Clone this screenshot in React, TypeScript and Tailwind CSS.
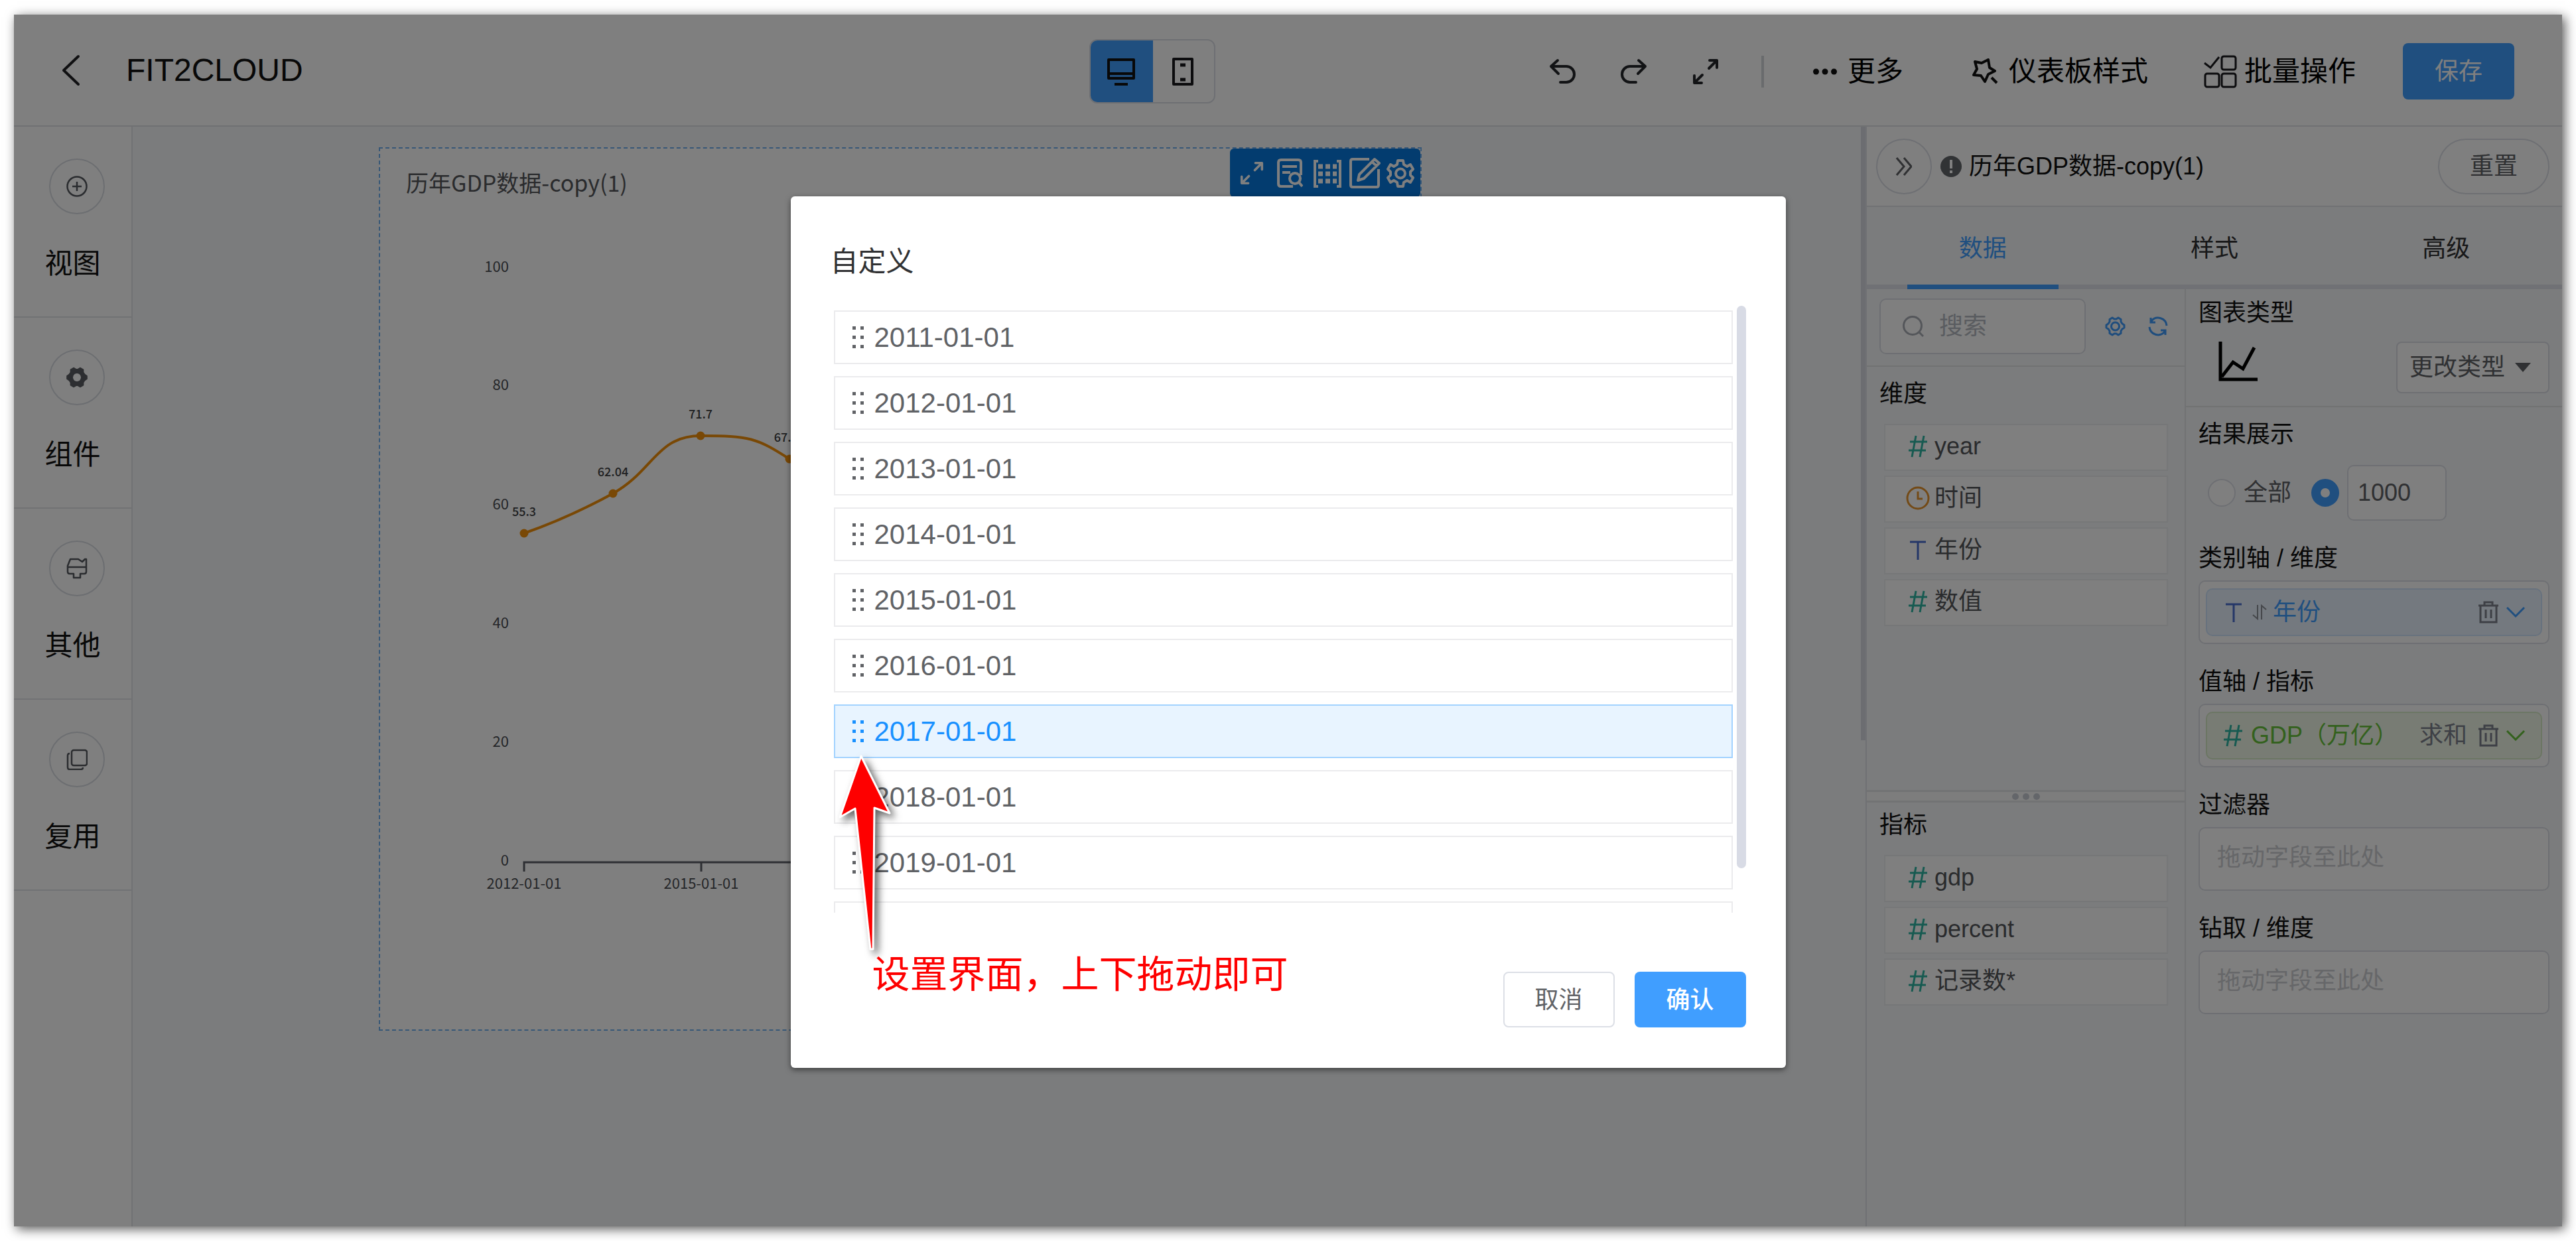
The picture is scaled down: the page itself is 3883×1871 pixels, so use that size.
import type { ReactNode } from "react";

const uiFont = "font-['Liberation_Sans','Noto_Sans_CJK_SC',sans-serif]";

const hexGear =
  "M13 3 L16 5 L19 5 L22 3 L26 5.500 L26 9 L28 12 L31 14 L31 18 L28 20 L26 23 L26 26.500 L22 29 L19 27 L16 27 L13 29 L9 26.500 L9 23 L7 20 L4 18 L4 14 L7 12 L9 9 L9 5.500 Z";

function BackIcon() {
  return (
    <svg className="h-12 w-7" viewBox="0 0 28 48" fill="none" stroke="#202124" strokeWidth="4" strokeLinecap="round" strokeLinejoin="round">
      <path d="M25 3 L3 24 L25 45" />
    </svg>
  );
}

function MonitorIcon() {
  return (
    <svg className="h-[42px] w-[44px]" viewBox="0 0 44 42" fill="none" stroke="#111" strokeWidth="4">
      <path d="M3 3 H41 V31 H3 Z M3 24 H41 M12 40 H32" strokeLinejoin="round" />
    </svg>
  );
}

function PhoneIcon() {
  return (
    <svg className="h-[44px] w-[34px]" viewBox="0 0 34 44" fill="none" stroke="#18191c" strokeWidth="4">
      <path d="M3 3 H31 V41 H3 Z" strokeLinejoin="round" />
      <path d="M13 12 H21 M13 34 H21" strokeWidth="5" />
    </svg>
  );
}

function UndoIcon({ flip = false }: { flip?: boolean }) {
  return (
    <svg className={flip ? "h-10 w-10 -scale-x-100" : "h-10 w-10"} viewBox="0 0 40 40" fill="none" stroke="#25272b" strokeWidth="4" strokeLinecap="round" strokeLinejoin="round">
      <path d="M13 3 L3 12 L14 23 M3 12 H26 a12 12 0 0 1 0 24 H17" />
    </svg>
  );
}

function ExpandIcon({ className }: { className: string }) {
  return (
    <svg className={className} viewBox="0 0 40 40" fill="none" strokeWidth="4" strokeLinecap="round" strokeLinejoin="round">
      <path d="M26 3 H37 V14 M36 4 L25 15 M3 26 V37 H14 M4 36 L15 25" />
    </svg>
  );
}

function StyleIcon() {
  return (
    <svg className="h-10 w-10" viewBox="0 0 40 40" fill="none" stroke="#111" strokeWidth="4" strokeLinejoin="round">
      <path d="M5 5 L15 7 L25 2 L27 14 L35 19 L25 24 L20 35 L14 26 L3 25 L8 16 Z" />
      <path d="M30 29 L38 37" />
    </svg>
  );
}

function BatchIcon() {
  return (
    <svg className="h-[50px] w-[50px]" viewBox="0 0 50 50" fill="none" stroke="#18191c" strokeWidth="3">
      <path d="M1 12 L10 19 L23 3" />
      <rect x="27" y="2" width="21" height="20" rx="3" />
      <rect x="2" y="28" width="21" height="20" rx="3" />
      <rect x="27" y="28" width="21" height="20" rx="3" />
    </svg>
  );
}

function HashIcon({ className = "" }: { className?: string }) {
  return (
    <svg className={`h-[34px] w-[30px] shrink-0 ${className}`} viewBox="0 0 30 34" fill="none" stroke="#2fb5a2" strokeWidth="3">
      <path d="M12 1 L6 33 M24 1 L18 33 M3 10 H29 M1 23 H27" />
    </svg>
  );
}

function ClockIcon() {
  return (
    <svg className="h-[36px] w-[36px] shrink-0" viewBox="0 0 36 36" fill="none" stroke="#e6952e" strokeWidth="3">
      <circle cx="18" cy="18" r="16" />
      <path d="M18 8 V19 H25" />
    </svg>
  );
}

function TextIcon() {
  return (
    <svg className="h-[30px] w-[26px] shrink-0" viewBox="0 0 26 30" fill="none" stroke="#4a6fd0" strokeWidth="3">
      <path d="M1 3 H25 M13 3 V30" />
    </svg>
  );
}

function SortIcon() {
  return (
    <svg className="h-6 w-6 shrink-0" viewBox="0 0 24 24" fill="none" stroke="#8b8f96" strokeWidth="2">
      <path d="M9 1 V22 L2 16 M15 23 V2 L22 8" />
    </svg>
  );
}

function TrashIcon() {
  return (
    <svg className="h-[34px] w-[32px] shrink-0" viewBox="0 0 32 34" fill="none" stroke="#7d818c" strokeWidth="3">
      <path d="M1 7 H31 M10 7 V2 H22 V7 M4 7 V32 H28 V7 M12 13 V26 M20 13 V26" />
    </svg>
  );
}

function ChevronIcon({ className }: { className: string }) {
  return (
    <svg className={`h-4 w-7 shrink-0 ${className}`} viewBox="0 0 28 16" fill="none" strokeWidth="3">
      <path d="M1 1 L14 14 L27 1" />
    </svg>
  );
}

const sideItems: { label: string; icon: ReactNode }[] = [
  {
    label: "视图",
    icon: (
      <svg className="h-8 w-8" viewBox="0 0 32 32" fill="none" stroke="#55585e" strokeWidth="2.500">
        <circle cx="16" cy="16" r="14.500" />
        <path d="M16 9 V23 M9 16 H23" />
      </svg>
    ),
  },
  {
    label: "组件",
    icon: (
      <svg className="h-9 w-9" viewBox="1 0 33 32" fill="#5a5d63" stroke="#5a5d63" strokeWidth="2" strokeLinejoin="round">
        <path d={`${hexGear} M17.500 9.500 a6.500 6.500 0 1 0 0.010 0 Z`} fillRule="evenodd" />
      </svg>
    ),
  },
  {
    label: "其他",
    icon: (
      <svg className="h-8 w-8" viewBox="0 0 32 32" fill="none" stroke="#55585e" strokeWidth="2.500" strokeLinejoin="round">
        <path d="M6 2 H18 L24 6 L28 2 H30 V21 q0 3 -3 3 H21 V30 H11 V24 H5 q-3 0 -3 -3 V12 Z M2 14 H30" />
      </svg>
    ),
  },
  {
    label: "复用",
    icon: (
      <svg className="h-8 w-8" viewBox="0 0 32 32" fill="none" stroke="#55585e" strokeWidth="2.500">
        <rect x="8" y="2" width="23" height="23" rx="3" />
        <path d="M5 7 q-3 0 -3 3 V28 q0 3 3 3 H22 q3 0 3 -3" />
      </svg>
    ),
  },
];

function Header() {
  return (
    <header className="flex h-[169px] shrink-0 items-center border-b-2 border-[#e0e2e6] bg-white pt-1 pr-[72px] pl-[72px]">
      <div className="flex flex-1 items-center pb-1">
        <button aria-label="返回">
          <BackIcon />
        </button>
        <h1 className="ml-[69px] text-[48px] leading-[56px] text-[#111]">FIT2CLOUD</h1>
      </div>
      <div className="flex h-[97px] shrink-0 overflow-hidden rounded-[12px] border-2 border-[#dcdfe6]">
        <button aria-label="桌面端" className="-m-[2px] flex w-[96px] items-center justify-center bg-[#409eff]">
          <MonitorIcon />
        </button>
        <button aria-label="移动端" className="flex w-[94px] items-center justify-center">
          <PhoneIcon />
        </button>
      </div>
      <div className="ml-[503px] flex shrink-0 items-center">
        <div className="flex items-center gap-[68px]">
          <button aria-label="撤销">
            <UndoIcon />
          </button>
          <button aria-label="重做">
            <UndoIcon flip />
          </button>
          <button aria-label="全屏">
            <ExpandIcon className="h-10 w-10 stroke-[#25272b]" />
          </button>
        </div>
        <span className="ml-16 h-12 w-1 bg-[#d3d6da]" />
        <button className="ml-[74px] flex items-center gap-4 text-[42px] leading-[50px]">
          <svg className="h-[10px] w-9" viewBox="0 0 36 10" fill="#111">
            <circle cx="4.500" cy="5" r="4.500" />
            <circle cx="18" cy="5" r="4.500" />
            <circle cx="31.500" cy="5" r="4.500" />
          </svg>
          更多
        </button>
        <button className="ml-[103px] flex items-center gap-4 text-[42px] leading-[50px]">
          <StyleIcon />
          仪表板样式
        </button>
        <button className="ml-[84px] flex items-center gap-[11px] text-[42px] leading-[50px]">
          <BatchIcon />
          批量操作
        </button>
        <button className="ml-[71px] h-[85px] w-[168px] rounded-[8px] bg-[#409eff] text-[36px] text-white">保存</button>
      </div>
    </header>
  );
}

function Sidebar() {
  return (
    <nav className="w-[179px] shrink-0 border-r-2 border-[#e2e4e8] bg-white">
      {sideItems.map((item) => (
        <button key={item.label} className="flex h-[288px] w-full flex-col items-center border-b-2 border-[#e2e4e8] pt-12">
          <span className="ml-3 flex h-[84px] w-[84px] items-center justify-center rounded-full border-2 border-[#d9dce2]">{item.icon}</span>
          <span className="mt-[54px] text-[42px] leading-[42px] text-[#111]">{item.label}</span>
        </button>
      ))}
    </nav>
  );
}

const yLabels = [
  ["100", 402],
  ["80", 580],
  ["60", 760],
  ["40", 939],
  ["20", 1118],
  ["0", 1297],
] as const;

const points = [
  { x: 790, y: 804, label: "55.3" },
  { x: 924, y: 744, label: "62.04" },
  { x: 1056, y: 657, label: "71.7" },
  { x: 1190, y: 692, label: "67.52" },
];

function GdpChart() {
  return (
    <svg className="h-[1100px] w-[1000px]" viewBox="573 296 1000 1100" role="img" aria-label="历年GDP数据" fontFamily="'Noto Sans CJK SC', sans-serif">
      <g fontSize="22" fill="#4a4d52" textAnchor="end">
        {yLabels.map(([label, y]) => (
          <text key={label} x="767" y={y + 8}>
            {label}
          </text>
        ))}
      </g>
      <path d="M790 1314 V1300 H1573 M1057 1300 V1314" fill="none" stroke="#5c5f66" strokeWidth="3" />
      <g fontSize="22" fill="#4a4d52" textAnchor="middle">
        <text x="790" y="1340">2012-01-01</text>
        <text x="1057" y="1340">2015-01-01</text>
      </g>
      <path d="M790 804 C830 790 880 768 924 744 C985 710 990 657 1056 657 C1130 657 1140 660 1190 692" fill="none" stroke="#f3900a" strokeWidth="4" />
      {points.map((p) => (
        <g key={p.label}>
          <circle cx={p.x} cy={p.y} r="6.500" fill="#f3900a" />
          <text x={p.x} y={p.y - 26} fontSize="18" fontWeight="500" fill="#3c3e42" textAnchor="middle">
            {p.label}
          </text>
        </g>
      ))}
    </svg>
  );
}

function ChartToolbar() {
  return (
    <div className="absolute top-0 right-0 flex h-[73px] w-[287px] items-center rounded-[6px] bg-[#0678de] pl-[15px]">
      <button aria-label="放大">
        <ExpandIcon className="h-9 w-9 stroke-white" />
      </button>
      <button aria-label="详情" className="ml-[19px]">
        <svg className="h-11 w-10" viewBox="0 0 40 44" fill="none" stroke="#fff" strokeWidth="4">
          <path d="M37 25 V6 q0 -4 -4 -4 H7 q-4 0 -4 4 V38 q0 4 4 4 H25 M9 12 H31 M9 21 H21" />
          <circle cx="28" cy="30" r="8" />
          <path d="M34 36 L39 42" />
        </svg>
      </button>
      <button aria-label="数据" className="ml-[15px]">
        <svg className="h-11 w-11" viewBox="0 0 44 44" fill="none" stroke="#fff" strokeWidth="4">
          <path d="M8 4 H3 V42 H8 M36 4 H41 V42 H36" />
          <path d="M8 12 H36 M8 23 H36 M8 34 H36" strokeWidth="7" strokeDasharray="7 4" />
        </svg>
      </button>
      <button aria-label="编辑" className="ml-[10px]">
        <svg className="h-12 w-12" viewBox="0 0 48 48" fill="none" stroke="#fff" strokeWidth="4" strokeLinejoin="round">
          <path d="M31 3 H6 q-3 0 -3 3 V42 q0 3 3 3 H42 q3 0 3 -3 V18" />
          <path d="M14 35 L16 26 L39 3 L46 9 L23 32 Z M35 7 L42 13" />
        </svg>
      </button>
      <button aria-label="设置" className="ml-2">
        <svg className="h-11 w-11" viewBox="0 0 44 44" fill="none" stroke="#fff" strokeWidth="4" strokeLinejoin="round">
          <path d="M18 3 H26 L27 9 L32 12 L37 9 L41 16 L37 20 V25 L41 29 L37 36 L32 33 L27 36 L26 42 H18 L17 36 L12 33 L7 36 L3 29 L7 25 V20 L3 16 L7 9 L12 12 L17 9 Z" />
          <circle cx="22" cy="22.500" r="7" />
        </svg>
      </button>
    </div>
  );
}

function Canvas() {
  return (
    <main className="min-w-0 flex-1 bg-[#f6f8fa]">
      <section className="relative mt-[31px] mr-[662px] ml-[371px] h-[1332px] overflow-hidden border-2 border-dashed border-[#70b0ee] bg-white pt-[30px]">
        <h2 className="pl-[39px] font-['Noto_Sans_CJK_SC',sans-serif] text-[34px] leading-[42px] text-[#55575b]">历年GDP数据-copy(1)</h2>
        <GdpChart />
        <ChartToolbar />
      </section>
    </main>
  );
}

function FieldRow({ icon, label }: { icon: ReactNode; label: string }) {
  return (
    <li className="flex h-[71px] items-center border-2 border-[#eceef0] bg-white pb-1 pl-[30px] text-[36px] leading-[42px] text-[#55575b]">
      <span className="flex w-[38px] justify-center">{icon}</span>
      <span className="ml-[6px]">{label}</span>
    </li>
  );
}

function FieldColumn() {
  return (
    <div className="flex w-[481px] shrink-0 flex-col border-r-2 border-[#e2e4e8]">
      <div className="flex h-[117px] items-start border-b-2 border-[#e2e5e4] pt-[14px] pl-[19px]">
        <label className="flex h-[84px] w-[311px] items-center rounded-[10px] border-2 border-[#dcdfe6] bg-white pl-[33px]">
          <svg className="h-8 w-8 shrink-0" viewBox="0 0 32 32" fill="none" stroke="#a9adb5" strokeWidth="3">
            <circle cx="15" cy="15" r="13.500" />
            <path d="M25 25 L31 31" />
          </svg>
          <input aria-label="搜索" placeholder="搜索" className="ml-[23px] w-[200px] text-[36px] outline-none placeholder:text-[#b4b8c0]" />
        </label>
        <button aria-label="字段设置" className="mt-[26px] ml-[27px]">
          <svg className="h-8 w-[35px]" viewBox="0 0 35 32" fill="none" stroke="#3f9bfb" strokeWidth="3" strokeLinejoin="round">
            <path d={hexGear} />
            <circle cx="17.500" cy="16" r="6" />
          </svg>
        </button>
        <button aria-label="刷新" className="mt-[27px] ml-[32px]">
          <svg className="h-[30px] w-[30px]" viewBox="0 0 30 30" fill="none" stroke="#3f9bfb" strokeWidth="3">
            <path d="M28 14 A13 13 0 0 0 5 7 M4 2 V9 H11 M2 16 A13 13 0 0 0 25 23 M26 28 V21 H19" />
          </svg>
        </button>
      </div>
      <div className="h-[638px] pt-5 pr-[25px] pl-[26px]">
        <h3 className="-ml-[7px] mb-[24px] text-[36px] leading-[42px] text-[#111]">维度</h3>
        <ul className="flex flex-col gap-[7px]">
          <FieldRow icon={<HashIcon />} label="year" />
          <FieldRow icon={<ClockIcon />} label="时间" />
          <FieldRow icon={<TextIcon />} label="年份" />
          <FieldRow icon={<HashIcon />} label="数值" />
        </ul>
      </div>
      <div className="flex h-[19px] items-center justify-center gap-[6px] border-y-3 border-[#e4e6e9] bg-[#fbfbfb]">
        <i className="h-[10px] w-[10px] rounded-full bg-[#c9ccd4]" />
        <i className="h-[10px] w-[10px] rounded-full bg-[#c9ccd4]" />
        <i className="h-[10px] w-[10px] rounded-full bg-[#c9ccd4]" />
      </div>
      <div className="pt-[13px] pr-[25px] pl-[26px]">
        <h3 className="-ml-[7px] mb-[24px] text-[36px] leading-[42px] text-[#111]">指标</h3>
        <ul className="flex flex-col gap-[7px]">
          <FieldRow icon={<HashIcon />} label="gdp" />
          <FieldRow icon={<HashIcon />} label="percent" />
          <FieldRow icon={<HashIcon />} label="记录数*" />
        </ul>
      </div>
    </div>
  );
}

function DropSection({ title, children }: { title: string; children: ReactNode }) {
  return (
    <section className="mt-9">
      <h3 className="mb-3 text-[36px] leading-[42px] text-[#111]">{title}</h3>
      <div className="flex h-24 items-center rounded-[10px] border-2 border-[#dcdfe6] bg-white px-[13px] text-[36px]">{children}</div>
    </section>
  );
}

function ConfigColumn() {
  return (
    <div className="min-w-0 flex-1">
      <div className="border-b-2 border-[#e2e5e4] pt-[15px] pr-[19px] pb-[19px] pl-[19px]">
        <h3 className="text-[36px] leading-[42px] text-[#111]">图表类型</h3>
        <div className="mt-[22px] flex items-start justify-between">
          <svg className="ml-[30px] h-[60px] w-[60px]" viewBox="0 0 60 60" fill="none" stroke="#000" strokeWidth="5">
            <path d="M3 0 V57 H59" />
            <path d="M5 53 L22 31 L37 41 L54 9" />
          </svg>
          <button className="flex h-[78px] w-[231px] items-center gap-[15px] rounded-[8px] border-2 border-[#dcdfe6] bg-white pl-[18px] text-[36px] text-[#606266]">
            更改类型
            <svg className="h-[14px] w-[24px]" viewBox="0 0 24 14" fill="#606266">
              <path d="M0 0 H24 L12 14 Z" />
            </svg>
          </button>
        </div>
      </div>
      <div className="pt-5 pr-[19px] pl-[19px]">
        <h3 className="text-[36px] leading-[42px] text-[#111]">结果展示</h3>
        <div className="mt-[25px] flex h-[84px] items-center pl-[14px] text-[36px] text-[#606266]">
          <label className="flex items-center gap-3">
            <input type="radio" name="limit" className="h-[42px] w-[42px] appearance-none rounded-full border-2 border-[#dcdfe6] bg-white" />
            全部
          </label>
          <input
            type="radio"
            name="limit"
            defaultChecked
            aria-label="自定义数量"
            className="ml-[30px] h-[42px] w-[42px] appearance-none rounded-full border-[14px] border-[#409eff] bg-white"
          />
          <input aria-label="结果数量" defaultValue="1000" className="ml-[12px] h-[84px] w-[150px] rounded-[10px] border-2 border-[#dcdfe6] bg-white pl-[14px] text-[36px]" />
        </div>
        <DropSection title="类别轴 / 维度">
          <div className="-mx-[4px] flex h-[72px] flex-1 items-center rounded-[10px] border-2 border-[#d0e5fc] bg-[#e8f2fe] pr-[24px] pl-[27px]">
            <TextIcon />
            <span className="ml-[14px] flex">
              <SortIcon />
            </span>
            <span className="ml-[8px] flex-1 text-[#409eff]">年份</span>
            <button aria-label="删除年份">
              <TrashIcon />
            </button>
            <button aria-label="年份选项" className="ml-[11px]">
              <ChevronIcon className="stroke-[#409eff]" />
            </button>
          </div>
        </DropSection>
        <DropSection title="值轴 / 指标">
          <div className="-mx-[4px] flex h-[72px] flex-1 items-center rounded-[10px] border-2 border-[#d9ecc8] bg-[#f0f8e8] pr-[24px] pl-[24px]">
            <HashIcon />
            <span className="ml-[12px] flex-1 whitespace-nowrap text-[#67c23a]">GDP（万亿）</span>
            <span className="mr-[16px] text-[#7d818c]">求和</span>
            <button aria-label="删除GDP">
              <TrashIcon />
            </button>
            <button aria-label="GDP选项" className="ml-[11px]">
              <ChevronIcon className="stroke-[#67c23a]" />
            </button>
          </div>
        </DropSection>
        <DropSection title="过滤器">
          <span className="pb-1 pl-[13px] text-[#ccced2]">拖动字段至此处</span>
        </DropSection>
        <DropSection title="钻取 / 维度">
          <span className="pb-1 pl-[13px] text-[#ccced2]">拖动字段至此处</span>
        </DropSection>
      </div>
    </div>
  );
}

function SettingsPanel() {
  return (
    <aside className="flex w-[1057px] shrink-0 bg-[#f6f8fa]">
      <div className="w-[9px] shrink-0 border-r-2 border-[#e0e2e8]">
        <div className="h-[925px] w-[7px] bg-[#d9dbe3]" />
      </div>
      <div className="flex min-w-0 flex-1 flex-col">
        <div className="flex h-[121px] shrink-0 items-center border-b-2 border-[#e2e4e8] bg-white pr-[19px] pl-[14px]">
          <button aria-label="收起" className="flex h-[84px] w-[84px] items-center justify-center rounded-full border-2 border-[#dcdfe6]">
            <svg className="h-7 w-6" viewBox="0 0 24 28" fill="none" stroke="#606266" strokeWidth="3">
              <path d="M1 1 L12 14 L1 27 M12 1 L23 14 L12 27" />
            </svg>
          </button>
          <svg className="ml-[13px] h-8 w-8" viewBox="0 0 32 32">
            <circle cx="16" cy="16" r="16" fill="#63666b" />
            <path d="M16 6 V19 M16 22 V26" stroke="#fff" strokeWidth="4" />
          </svg>
          <h2 className="ml-[11px] flex-1 text-[36px] leading-[42px] text-[#111]">历年GDP数据-copy(1)</h2>
          <button className="h-[84px] w-[168px] rounded-full border-2 border-[#dcdfe6] text-[36px] text-[#606266]">重置</button>
        </div>
        <div className="grid h-[124px] shrink-0 grid-cols-3 border-b-[7px] border-[#e0e3eb] text-[36px] text-[#303133]" role="tablist">
          <button role="tab" aria-selected="true" className="-mb-[7px] flex flex-col items-center text-[#409eff]">
            <span className="flex flex-1 items-center pt-2">数据</span>
            <span className="h-[7px] w-[228px] bg-[#409eff]" />
          </button>
          <button role="tab" aria-selected="false" className="pt-2">样式</button>
          <button role="tab" aria-selected="false" className="pt-2">高级</button>
        </div>
        <div className="flex flex-1">
          <FieldColumn />
          <ConfigColumn />
        </div>
      </div>
    </aside>
  );
}

const years = [2011, 2012, 2013, 2014, 2015, 2016, 2017, 2018, 2019, 2020];

function SortDialog() {
  return (
    <div role="dialog" aria-label="自定义" className="relative w-[1500px] rounded-[6px] bg-white pt-[68px] pb-[61px] shadow-[0_3px_8px_rgba(0,0,0,0.5)]">
      <h2 className="pl-[60px] text-[42px] leading-[62px] text-[#303133]">自定义</h2>
      <div className="mt-[35px] flex h-[915px] gap-[6px] overflow-hidden pr-[60px] pl-[65px]">
        <ul className="flex flex-1 flex-col gap-[18px] pt-[7px]">
          {years.map((year) => (
            <li
              key={year}
              className={
                year === 2017
                  ? "flex h-[81px] shrink-0 items-center border-2 border-[#a3d3ff] bg-[#e8f4ff] pl-[26px] text-[#1890ff]"
                  : "flex h-[81px] shrink-0 items-center border-2 border-[#ebebed] bg-white pl-[26px] text-[#606266]"
              }
            >
              <svg className="h-[34px] w-[18px]" viewBox="0 0 18 34" fill="currentColor">
                <path d="M0 0h5v5h-5z M12 0h5v5h-5z M0 14h5v5h-5z M12 14h5v5h-5z M0 28h5v5h-5z M12 28h5v5h-5z" />
              </svg>
              <span className="ml-[15px] text-[42px] leading-[48px]">{year}-01-01</span>
            </li>
          ))}
        </ul>
        <div className="h-[848px] w-[14px] rounded-full bg-[#d8dbe5]" />
      </div>
      <div className="mt-[89px] flex justify-end gap-[30px] pr-[60px] text-[36px]">
        <button className="h-[84px] w-[168px] rounded-[8px] border-2 border-[#dcdfe6] pt-[2px] text-[#606266]">取消</button>
        <button className="h-[84px] w-[168px] rounded-[8px] bg-[#409eff] pt-[2px] font-medium text-white">确认</button>
      </div>
      <svg className="absolute top-[836px] left-[55px] h-[320px] w-[120px] drop-shadow-[6px_6px_6px_rgba(0,0,0,0.6)]" viewBox="1247 1132 120 320">
        <path d="M1298 1140 L1341 1226 L1318 1218 L1316 1431 L1312 1431 L1289 1219 L1266 1232 Z" fill="#fe0000" stroke="#fff" strokeWidth="3" strokeLinejoin="round" />
      </svg>
      <p className="absolute top-[1144px] left-[123px] font-['Liberation_Serif','Noto_Sans_CJK_SC',serif] text-[57px] leading-[60px] whitespace-nowrap text-[#fe0000]">设置界面，上下拖动即可</p>
    </div>
  );
}

export default function App() {
  return (
    <div className={`flex min-h-screen bg-white px-[21px] py-[22px] ${uiFont}`}>
      <div className="relative flex min-w-0 flex-1 flex-col bg-white shadow-[4px_4px_16px_rgba(0,0,0,0.65)]">
        <Header />
        <div className="flex flex-1">
          <Sidebar />
          <Canvas />
          <SettingsPanel />
        </div>
        <div className="absolute inset-0 flex items-start justify-center bg-black/50 pt-[274px]">
          <SortDialog />
        </div>
      </div>
    </div>
  );
}
